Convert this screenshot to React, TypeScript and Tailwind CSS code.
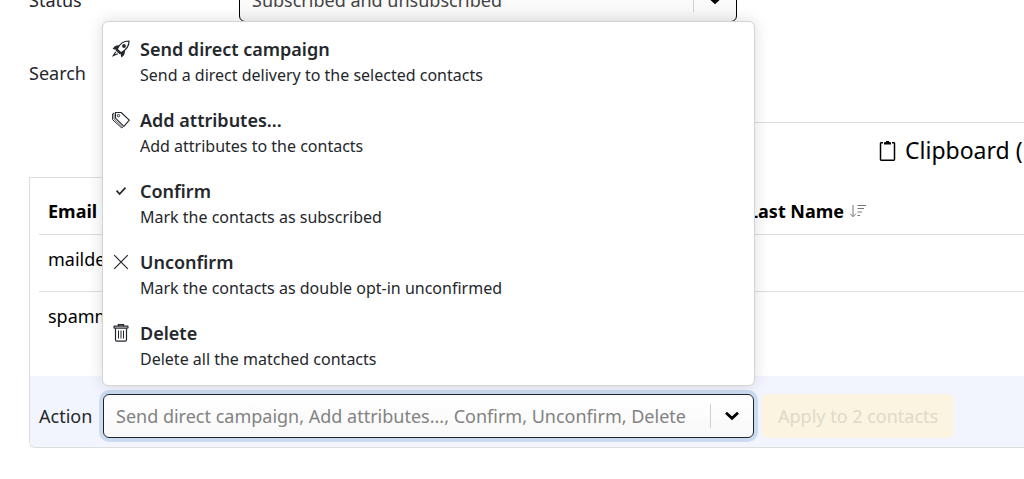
import React from "react";

const RocketIcon = () => (
  <svg viewBox="0 0 18 18" className="h-[18px] w-[18px]" fill="none" stroke="currentColor">
    <path
      d="M5.2 9.3C7 4.600 10.800 1.100 17 1c.1 5.200-3.200 9.200-8 11.700z"
      strokeWidth="1.200"
    />
    <path
      d="M6.500 5.300 8 4.900 5 10 .6 8.900C1.800 6.800 3.800 5.500 6.500 5.300zM13.100 10.200l-.2 2.200c-.4 2.200-1.600 4-3.500 5L8.300 13z"
      fill="currentColor"
      stroke="none"
    />
    <path d="M4.600 9.200 9.200 13.300 7.600 14.200 3.700 10.600z" fill="currentColor" stroke="none" />
    <path d="M3.800 11.700 1.300 15.600 5.800 13.800" strokeWidth="1.200" />
    <circle cx="12" cy="6" r="1.900" fill="currentColor" stroke="none" />
  </svg>
);

const TagsIcon = () => (
  <svg
    viewBox="0 0 18 18"
    className="h-[18px] w-[18px]"
    fill="none"
    stroke="currentColor"
    strokeLinejoin="round"
  >
    <path d="M3.500 1.500h5.600l8.200 7.700-5.400 6.100-8.400-8.100z" strokeWidth="1.100" />
    <path d="M2.300 2 .6 2.800v5.900l8.800 8 1.600-.6" />
    <path d="M2 2.300v5.600l8.300 8" strokeWidth=".7" />
    <circle cx="6.500" cy="4.600" r="1.200" />
  </svg>
);

const CheckIcon = () => (
  <svg viewBox="0 0 18 18" className="h-[18px] w-[18px]" fill="none" stroke="currentColor">
    <path d="m4.600 8.600 3 3.400 5.900-6.400" strokeWidth="1.700" />
  </svg>
);

const CrossIcon = () => (
  <svg viewBox="0 0 18 18" className="h-[18px] w-[18px]" fill="none" stroke="currentColor">
    <path d="m2.200 2.200 13.600 13.600M15.800 2.200 2.200 15.800" strokeWidth="1.200" />
  </svg>
);

const TrashIcon = () => (
  <svg viewBox="0 0 18 18" className="h-[18px] w-[18px]" fill="none" stroke="currentColor">
    <path d="M6.500 2V.8h5V2" strokeWidth="1.400" />
    <rect x="2" y="2.200" width="14" height="1.900" rx=".6" strokeWidth="1.200" />
    <path d="M3.500 4.500v11.300c0 .8.500 1.300 1.300 1.300h8.400c.8 0 1.300-.5 1.300-1.300V4.500" strokeWidth="1.200" />
    <path d="M6.500 6.500v8M9 6.500v8M11.500 6.500v8" />
  </svg>
);

const ClipboardIcon = () => (
  <svg viewBox="0 0 18 22" className="h-[22px] w-[18px]" fill="none" stroke="currentColor">
    <path
      d="M5 2.700H3.200c-.4 0-.7.300-.7.700v16.100c0 .4.300.7.700.7h12.600c.4 0 .7-.3.700-.7V3.400c0-.4-.3-.7-.7-.7H14"
      strokeWidth="1.500"
    />
    <path d="M6 4.600V2.200h1.500L8.300 1h2.400l.8 1.200H13v2.400z" fill="currentColor" stroke="none" />
  </svg>
);

const SortIcon = () => (
  <svg viewBox="0 0 18 14" className="h-[14px] w-[18px]" fill="none" stroke="currentColor">
    <path d="M4 1v11.500M1 9.700l3 3 3-3M8.500 1.500H17M8.500 4.500H15M8.500 8H13M8.500 11.500h2.500" />
  </svg>
);

const Caret = () => (
  <span className="pointer-events-none absolute inset-y-0 right-0 flex w-11 items-center justify-center">
    <span className="absolute left-0 h-6 border-l border-[#d0d0d0]" />
    <svg viewBox="0 0 16 10" className="h-[10px] w-[16px]" fill="none" stroke="#000">
      <path d="m2 1.800 6 5.500 6-5.500" strokeWidth="2.800" />
    </svg>
  </span>
);

const actions = [
  {
    title: "Send direct campaign",
    description: "Send a direct delivery to the selected contacts",
    icon: RocketIcon,
  },
  {
    title: "Add attributes...",
    description: "Add attributes to the contacts",
    icon: TagsIcon,
  },
  {
    title: "Confirm",
    description: "Mark the contacts as subscribed",
    icon: CheckIcon,
  },
  {
    title: "Unconfirm",
    description: "Mark the contacts as double opt-in unconfirmed",
    icon: CrossIcon,
  },
  {
    title: "Delete",
    description: "Delete all the matched contacts",
    icon: TrashIcon,
  },
];

const contacts = [{ email: "maildemo" }, { email: "spammer" }];

const ActionMenu: React.FC = () => (
  <ul className="absolute -inset-x-px bottom-full z-10 mb-2 rounded-md border border-[#d4d4d4] bg-white pt-1 pb-1 shadow-[0_0_16px_rgba(0,0,0,0.14)]">
    {actions.map(({ title, description, icon: Icon }) => (
      <li key={title}>
        <button type="button" className="flex w-full gap-[10px] px-[9px] pt-[10px] pb-[9px] text-left">
          <span className="flex h-[26px] items-center">
            <Icon />
          </span>
          <span>
            <span className="block text-[18px] leading-[26px] font-semibold">{title}</span>
            <span className="block text-[16px] leading-[26px]">{description}</span>
          </span>
        </button>
      </li>
    ))}
  </ul>
);

const App: React.FC = () => {
  return (
    <main className="overflow-hidden bg-white font-['Noto_Sans',sans-serif] text-[18px] text-[#24272c]">
      <form className="-mt-[22px] flex flex-col gap-[29px] pl-[29px]">
        <div className="flex items-center">
          <label htmlFor="status" className="w-[210px]">
            Status
          </label>
          <div className="relative w-[498px]">
            <select
              id="status"
              className="h-11 w-full appearance-none rounded-md border border-black bg-linear-to-b from-white to-[#f6f6f6] px-3 text-[#444]"
            >
              <option>Subscribed and unsubscribed</option>
            </select>
            <Caret />
          </div>
        </div>
        <div className="flex items-center">
          <label htmlFor="search" className="w-[210px]">
            Search
          </label>
          <input
            id="search"
            type="text"
            className="h-11 w-[498px] rounded-md border border-black px-3"
          />
        </div>
      </form>

      <section className="mt-[27px] pl-[29px] text-black">
        <div className="flex items-end">
          <div className="w-[400px] shrink-0 border-b border-[#dedede]" />
          <div className="flex h-14 min-w-0 flex-1 border-t border-[#dedede] pl-[449px]">
            <h2 className="flex items-center gap-[9px] text-[23px] whitespace-nowrap">
              <ClipboardIcon />
              Clipboard (
            </h2>
          </div>
        </div>

        <div className="rounded-bl-md border-b border-l border-[#dedede]">
          <div className="pb-7 pl-[9px]">
            <table className="w-full table-fixed text-left">
              <thead>
                <tr className="h-14 border-b border-[#dedede]">
                  <th className="w-[340px] px-[9px] pt-[11px]">Email</th>
                  <th className="w-[360px] px-[9px] pt-[11px]">First Name</th>
                  <th className="px-[9px] pt-[11px]">
                    <span className="flex items-center gap-[5px]">
                      Last Name
                      <span className="text-[#777]">
                        <SortIcon />
                      </span>
                    </span>
                  </th>
                </tr>
              </thead>
              <tbody>
                {contacts.map((contact) => (
                  <tr key={contact.email} className="h-[57px] border-b border-[#dedede] last:border-0">
                    <td className="px-[9px] pb-[7px]">{contact.email}</td>
                    <td />
                    <td />
                  </tr>
                ))}
              </tbody>
            </table>
          </div>

          <div className="flex items-center rounded-bl-md bg-[#f2f5fd] pt-[18px] pb-[9px] pl-[9px] text-[#24272c]">
            <label htmlFor="action" className="w-16">
              Action
            </label>
            <div className="relative w-[651px]">
              <ActionMenu />
              <select
                id="action"
                defaultValue=""
                className="h-11 w-full appearance-none rounded-md border border-[#1a2430] bg-linear-to-b from-white to-[#f8f8f8] px-3 text-[#828282] ring-4 ring-[#cbdcf1] outline-none"
              >
                <option value="">{actions.map((action) => action.title).join(", ")}</option>
                {actions.map((action) => (
                  <option key={action.title}>{action.title}</option>
                ))}
              </select>
              <Caret />
            </div>
            <button
              type="button"
              disabled
              className="ml-2 h-11 rounded-md bg-[#faf4e0] px-4 whitespace-nowrap text-[#dedaca]"
            >
              Apply to 2 contacts
            </button>
          </div>
        </div>
      </section>
    </main>
  );
};

export default App;
